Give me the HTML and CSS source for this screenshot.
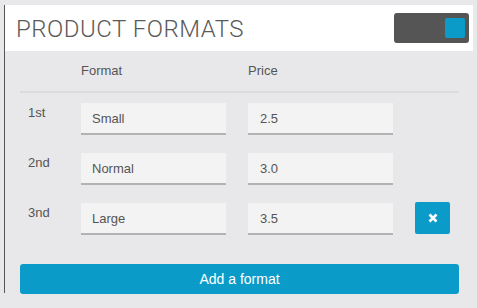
FILE: index.html
```html
<!DOCTYPE html>
<html>
<head>
<meta charset="utf-8">
<link rel="stylesheet" href="styles.css">
</head>
<body>
<div class="panel">
  <div class="header">
    <h1 class="title">PRODUCT FORMATS</h1>
    <div class="toggle"><span class="knob"></span></div>
  </div>
  <div class="content">
    <div class="grid heads">
      <span></span>
      <span class="head">Format</span>
      <span class="head">Price</span>
      <span></span>
    </div>
    <div class="divider"></div>
    <div class="grid row">
      <span class="label">1st</span>
      <div class="field">Small</div>
      <div class="field price">2.5</div>
      <span></span>
    </div>
    <div class="grid row">
      <span class="label">2nd</span>
      <div class="field">Normal</div>
      <div class="field price">3.0</div>
      <span></span>
    </div>
    <div class="grid row">
      <span class="label">3nd</span>
      <div class="field">Large</div>
      <div class="field price">3.5</div>
      <button class="del" aria-label="Remove"><svg width="10" height="10" viewBox="0 0 10 10"><path d="M1.5 1.5 L8.5 8.5 M8.5 1.5 L1.5 8.5" stroke="#fff" stroke-width="2.6" stroke-linecap="butt"/></svg></button>
    </div>
    <button class="add">Add a format</button>
  </div>
</div>
</body>
</html>
```
FILE: styles.css
```css
* { box-sizing: border-box; }
html, body { margin: 0; padding: 0; }
body {
  background: #e8e8ea;
  font-family: "Liberation Sans", Arial, sans-serif;
  color: #555;
  width: 477px;
  height: 308px;
  overflow: hidden;
}
.panel {
  margin: 5px 4px 0 4px;
  border-left: 1px solid #555;
  height: 288px;
}
.header {
  background: #fff;
  height: 46px;
  display: flex;
  align-items: center;
  justify-content: space-between;
  padding: 0 4px 0 11px;
}
.title {
  margin: 0;
  font-family: Roboto, "Liberation Sans", sans-serif;
  font-weight: 300;
  font-size: 24px;
  letter-spacing: 0.5px;
  color: #5a5a5a;
  line-height: 1;
  margin-top: 2px;
}
.toggle {
  width: 75px;
  height: 30px;
  background: #555;
  border-radius: 3px;
  display: flex;
  align-items: center;
  justify-content: flex-end;
  padding-right: 4px;
}
.knob {
  width: 20px;
  height: 20px;
  background: #0b9bc8;
  border-radius: 2px;
}
.content {
  padding: 0 14px 0 15px;
}
.grid {
  display: grid;
  grid-template-columns: 39px 145px 145px 35px;
  column-gap: 22px;
}
.heads {
  height: 38px;
  align-items: center;
  font-size: 13px;
}
.divider {
  height: 2px;
  background: #dcdcde;
  margin-top: 2px;
  margin-bottom: 10px;
}
.row {
  height: 32px;
  margin-bottom: 18px;
  font-size: 13px;
}
.label {
  padding-left: 8px;
  padding-top: 2px;
}
.field {
  background: #f3f3f3;
  border-bottom: 2px solid #b3b3b3;
  height: 32px;
  display: flex;
  align-items: center;
  padding-left: 11px;
  font-size: 13px;
  color: #555;
}
.field.price { padding-left: 12px; }
.del {
  width: 35px;
  height: 32px;
  background: #0b9bc8;
  border: none;
  border-radius: 2px;
  padding: 0;
  display: flex;
  align-items: center;
  justify-content: center;
  margin-top: -1px;
}
.add {
  display: block;
  width: 439px;
  height: 30px;
  margin-top: 29px;
  background: #0b9bc8;
  border: none;
  border-radius: 3px;
  color: #fff;
  font-family: "Liberation Sans", Arial, sans-serif;
  font-size: 14px;
  padding: 0;
}
```
